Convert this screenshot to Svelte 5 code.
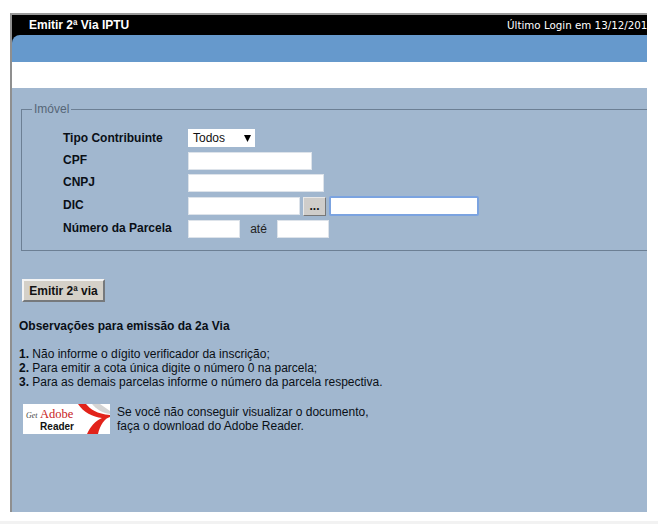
<script>
	let tipo = 'Todos';
</script>

<div class="page">
	<div class="window">
		<div class="titlebar">
			<span class="title">Emitir 2ª Via IPTU</span>
			<span class="login">Último Login em 13/12/2019</span>
		</div>
		<div class="bluebar"></div>
		<div class="whitebar"></div>
		<div class="content">
			<fieldset>
				<legend>Imóvel</legend>
				<div class="form">
					<div class="row">
						<span class="label">Tipo Contribuinte</span>
						<div class="select">
							<span>{tipo}</span>
							<svg width="7" height="7" viewBox="0 0 7 7"><path d="M0 0h7L3.5 7z" fill="#000" /></svg>
						</div>
					</div>
					<div class="row">
						<span class="label">CPF</span>
						<input class="w-cpf" />
					</div>
					<div class="row">
						<span class="label">CNPJ</span>
						<input class="w-cnpj" />
					</div>
					<div class="row dic">
						<span class="label">DIC</span>
						<input class="w-dic" />
						<button class="dots">...</button>
						<div class="focused"></div>
					</div>
					<div class="row">
						<span class="label">Número da Parcela</span>
						<input class="w-par" />
						<span class="ate">até</span>
						<input class="w-par" />
					</div>
				</div>
			</fieldset>

			<button class="emit">Emitir 2ª via</button>

			<h4>Observações para emissão da 2a Via</h4>
			<ol>
				<li><b>1.</b> Não informe o dígito verificador da inscrição;</li>
				<li><b>2.</b> Para emitir a cota única digite o número 0 na parcela;</li>
				<li><b>3.</b> Para as demais parcelas informe o número da parcela respectiva.</li>
			</ol>

			<div class="reader">
				<div class="badge">
					<div class="badge-text">
						<div class="get"><i>Get</i> <span>Adobe</span></div>
						<div class="rd">Reader</div>
					</div>
					<svg width="35" height="30" viewBox="0 0 35 30">
						<path d="M17 0h8l10 7v3C27 9 21 5 17 0z" fill="#d4d4d4" />
						<path d="M3 0h8c4 5 11 10 24 11v2c-5 1-10 8-12 17h-11c3-7 8-13 15-16C18 13 8 8 3 0z" fill="#e2231a" />
					</svg>
				</div>
				<p>Se você não conseguir visualizar o documento,<br />faça o download do Adobe Reader.</p>
			</div>
		</div>
	</div>
	<div class="footer"></div>
</div>

<style>
	:global(body) {
		margin: 0;
		background: #fff;
	}

	.page {
		width: 658px;
		height: 524px;
		overflow: hidden;
		padding-top: 13px;
		box-sizing: border-box;
		font-family: "Liberation Sans", Arial, sans-serif;
		font-size: 12px;
		color: #0a0f16;
	}

	.window {
		width: 637px;
		height: 499px;
		margin-left: 10px;
		box-sizing: border-box;
		border-top: 2px solid #999;
		border-left: 2px solid #8f8f8f;
		overflow: hidden;
		display: flex;
		flex-direction: column;
		background: #000;
	}

	.titlebar {
		height: 20px;
		flex: none;
		background: #000;
		color: #fff;
		display: flex;
		align-items: center;
		white-space: nowrap;
		padding-left: 17px;
	}

	.title {
		font-weight: bold;
		width: 478px;
		flex: none;
	}

	.login {
		font-family: "DejaVu Sans", Verdana, sans-serif;
		font-size: 10.3px;
	}

	.bluebar {
		height: 27px;
		flex: none;
		background: #6699cc;
		border-top-left-radius: 8px;
	}

	.whitebar {
		height: 26px;
		flex: none;
		background: #fff;
	}

	.content {
		flex: 1;
		background: #a1b7cf;
		padding-top: 15px;
		min-width: 0;
		overflow: hidden;
	}

	fieldset {
		width: 660px;
		height: 148px;
		box-sizing: border-box;
		margin: 0 0 0 9px;
		border: 1px solid #6c7f94;
		border-right: none;
		padding: 0;
		font-size: 12px;
	}

	legend {
		margin-left: 10px;
		padding: 0 2px;
		color: #566677;
		font-size: 12px;
		line-height: 13px;
	}

	.form {
		display: flex;
		flex-direction: column;
		padding: 12px 0 0 41px;
	}

	.row {
		display: flex;
		align-items: center;
		height: 22px;
	}

	.row.dic {
		height: 24px;
	}

	.label {
		width: 125px;
		flex: none;
		font-weight: bold;
		color: #0a0f16;
		position: relative;
		top: -1px;
	}

	input {
		height: 18px;
		box-sizing: border-box;
		border: 1px solid #dde3ea;
		background: #fff;
		padding: 0;
		margin: 0;
	}

	.w-cpf { width: 124px; }
	.w-cnpj { width: 136px; }
	.w-dic { width: 112px; }
	.w-par { width: 52px; }

	.select {
		width: 67px;
		height: 18px;
		margin-bottom: 2px;
		box-sizing: border-box;
		background: #fff;
		display: flex;
		align-items: center;
		justify-content: space-between;
		padding: 0 4px 0 5px;
		color: #111;
	}

	.dots {
		width: 23px;
		height: 19px;
		margin: 0 3px 0 3px;
		padding: 0;
		box-sizing: border-box;
		background: #cfcdca;
		border: 1px solid;
		border-color: #e8e8e8 #777 #777 #e8e8e8;
		font: bold 12px "Liberation Sans", Arial, sans-serif;
		line-height: 14px;
		color: #111;
	}

	.focused {
		width: 150px;
		height: 20px;
		box-sizing: border-box;
		background: #fff;
		border: 2px solid #7ba3e0;
		border-radius: 2px;
	}

	.ate {
		width: 37px;
		text-align: center;
		flex: none;
		color: #222;
	}

	.emit {
		display: block;
		margin: 28px 0 0 10px;
		width: 83px;
		height: 23px;
		padding: 0;
		box-sizing: border-box;
		background: #d4d0c8;
		border: 2px solid;
		border-color: #f4f4f4 #76797c #76797c #f4f4f4;
		font: bold 12px "Liberation Sans", Arial, sans-serif;
		color: #111;
	}

	h4 {
		margin: 17px 0 0 7px;
		font-size: 12px;
		line-height: 14px;
		font-weight: bold;
	}

	ol {
		list-style: none;
		margin: 14px 0 0 7px;
		padding: 0;
		line-height: 14px;
	}

	.reader {
		display: flex;
		align-items: flex-start;
		margin: 15px 0 0 11px;
	}

	.badge {
		width: 87px;
		height: 30px;
		flex: none;
		background: #fff;
		display: flex;
		justify-content: space-between;
		overflow: hidden;
	}

	.badge-text {
		width: 52px;
		flex: none;
		padding: 5px 0 0 3px;
		box-sizing: border-box;
		line-height: 10px;
		white-space: nowrap;
	}

	.get {
		font-family: "Liberation Serif", serif;
		font-size: 12.5px;
		color: #c8201c;
	}

	.get i {
		font-size: 8px;
		color: #444;
	}

	.rd {
		font-size: 10px;
		font-weight: bold;
		color: #111;
		text-align: right;
		padding-right: 1px;
		margin-top: 1px;
	}

	.reader p {
		margin: 1px 0 0 7px;
		line-height: 14px;
	}

	.footer {
		height: 4px;
		margin-top: 9px;
		background: #f2f2f2;
	}
</style>
